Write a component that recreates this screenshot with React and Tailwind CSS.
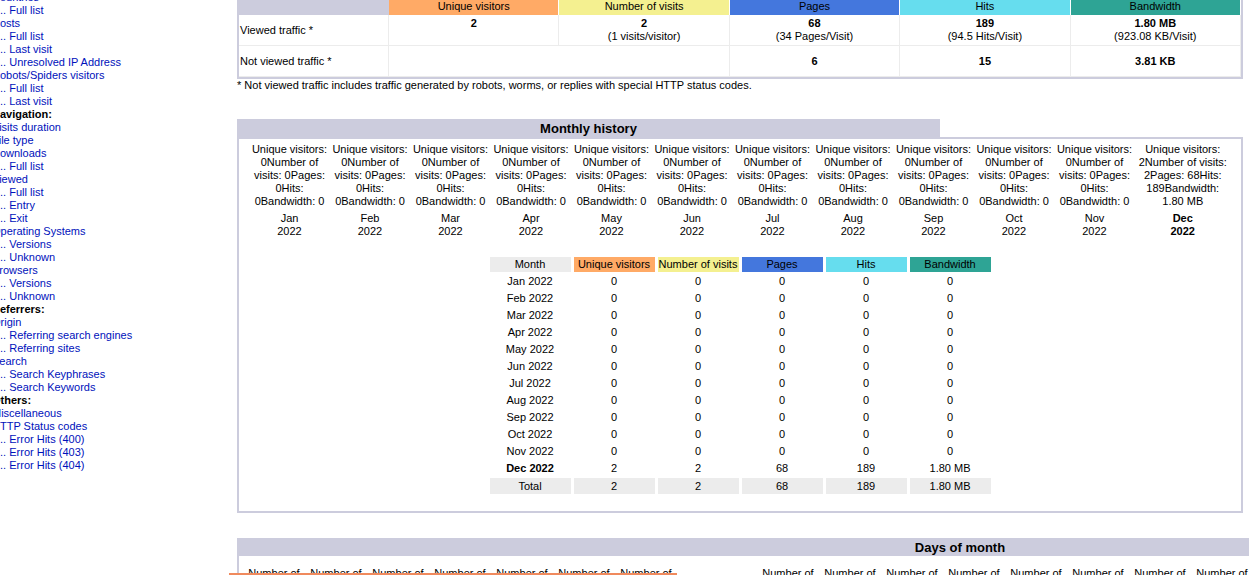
const menu = [
  { t: "Who:", h: true },
  { t: "Countries" },
  { t: "Full list", s: true },
  { t: "Hosts" },
  { t: "Full list", s: true },
  { t: "Last visit", s: true },
  { t: "Unresolved IP Address", s: true },
  { t: "Robots/Spiders visitors" },
  { t: "Full list", s: true },
  { t: "Last visit", s: true },
  { t: "Navigation:", h: true },
  { t: "Visits duration" },
  { t: "File type" },
  { t: "Downloads" },
  { t: "Full list", s: true },
  { t: "Viewed" },
  { t: "Full list", s: true },
  { t: "Entry", s: true },
  { t: "Exit", s: true },
  { t: "Operating Systems" },
  { t: "Versions", s: true },
  { t: "Unknown", s: true },
  { t: "Browsers" },
  { t: "Versions", s: true },
  { t: "Unknown", s: true },
  { t: "Referrers:", h: true },
  { t: "Origin" },
  { t: "Referring search engines", s: true },
  { t: "Referring sites", s: true },
  { t: "Search" },
  { t: "Search Keyphrases", s: true },
  { t: "Search Keywords", s: true },
  { t: "Others:", h: true },
  { t: "Miscellaneous" },
  { t: "HTTP Status codes" },
  { t: "Error Hits (400)", s: true },
  { t: "Error Hits (403)", s: true },
  { t: "Error Hits (404)", s: true },
];

const heads = [
  { t: "Unique visitors", c: "bg-[#ffaa66]" },
  { t: "Number of visits", c: "bg-[#f4f090]" },
  { t: "Pages", c: "bg-[#4477dd]" },
  { t: "Hits", c: "bg-[#66ddee]" },
  { t: "Bandwidth", c: "bg-[#2ea495]" },
];

const months = ["Jan", "Feb", "Mar", "Apr", "May", "Jun", "Jul", "Aug", "Sep", "Oct", "Nov", "Dec"];

const zeroLines = ["Unique visitors:", "0Number of", "visits: 0Pages:", "0Hits:", "0Bandwidth: 0"];
const decLines = ["Unique visitors:", "2Number of visits:", "2Pages: 68Hits:", "189Bandwidth:", "1.80 MB"];

function Sidebar() {
  return (
    <div className="w-[245px] shrink-0 -ml-[8px] mt-[-22.5px]">
      {menu.map((m, i) =>
        m.h ? (
          <div key={i} className="font-bold whitespace-nowrap">{m.t}</div>
        ) : (
          <div key={i} className={`whitespace-nowrap text-[#0011bb] ${m.s ? "pl-[5px]" : ""}`}>
            {m.s ? "... " : ""}
            <a>{m.t}</a>
          </div>
        )
      )}
    </div>
  );
}

function Summary() {
  const cell = "border-r border-[#ececec] flex flex-col items-center justify-center";
  return (
    <>
      <div className="w-[1006px] bg-[#ccccdd] px-[2px] pb-[2px]">
        <div className="bg-white">
          <div className="grid grid-cols-[150px_repeat(5,1fr)] h-[17px]">
            <div className="bg-[#ccccdd]" />
            {heads.map((h) => (
              <div key={h.t} className={`${h.c} border-r border-white flex items-center justify-center`}>
                {h.t}
              </div>
            ))}
          </div>
          <div className="grid grid-cols-[150px_repeat(5,1fr)] h-[31px] border-b border-[#ececec]">
            <div className="border-r border-[#ececec] flex items-center pl-[1px]">Viewed traffic *</div>
            <div className={cell}><b>2</b><span>&nbsp;</span></div>
            <div className={cell}><b>2</b><span>(1 visits/visitor)</span></div>
            <div className={cell}><b>68</b><span>(34 Pages/Visit)</span></div>
            <div className={cell}><b>189</b><span>(94.5 Hits/Visit)</span></div>
            <div className={cell}><b>1.80 MB</b><span>(923.08 KB/Visit)</span></div>
          </div>
          <div className="grid grid-cols-[150px_repeat(5,1fr)] h-[31px] border-b border-[#ececec]">
            <div className="border-r border-[#ececec] flex items-center pl-[1px]">Not viewed traffic *</div>
            <div className={`${cell} col-span-2`} />
            <div className={cell}><b>6</b></div>
            <div className={cell}><b>15</b></div>
            <div className={cell}><b>3.81 KB</b></div>
          </div>
        </div>
      </div>
      <div className="whitespace-nowrap">
        * Not viewed traffic includes traffic generated by robots, worms, or replies with special HTTP status codes.
      </div>
    </>
  );
}

function MonthlyHistory() {
  const rows = months.map((m, i) =>
    i === 11 ? ["Dec 2022", "2", "2", "68", "189", "1.80 MB"] : [`${m} 2022`, "0", "0", "0", "0", "0"]
  );
  return (
    <div className="mt-[27px] w-[1006px]">
      <div className="flex h-[18px]">
        <div className="w-[703px] bg-[#ccccdd] flex items-center justify-center text-[13px] font-bold">
          Monthly history
        </div>
      </div>
      <div className="border-2 border-[#ccccdd] bg-white pt-[4px] pb-[17px]">
        <div className="flex justify-center">
          {months.map((m, i) => {
            const dec = i === 11;
            return (
              <div key={m} className={`${dec ? "w-[96px]" : "w-[80.5px]"} shrink-0 text-center whitespace-nowrap`}>
                {(dec ? decLines : zeroLines).map((l, j) => (
                  <div key={j}>{l}</div>
                ))}
                <div className={`mt-[4px] ${dec ? "font-bold" : ""}`}>
                  <div>{m}</div>
                  <div>2022</div>
                </div>
              </div>
            );
          })}
        </div>
        <div className="mt-[19px] flex flex-col items-center gap-y-[2px]">
          <div className="flex gap-x-[3px] h-[15px]">
            <div className="w-[81px] bg-[#ececec] flex items-center justify-center">Month</div>
            {heads.map((h) => (
              <div key={h.t} className={`w-[81px] ${h.c} flex items-center justify-center whitespace-nowrap`}>
                {h.t}
              </div>
            ))}
          </div>
          {rows.map((r, i) => (
            <div key={i} className="flex gap-x-[3px] h-[15px]">
              {r.map((v, j) => (
                <div
                  key={j}
                  className={`w-[81px] flex items-center justify-center ${i === 11 && j === 0 ? "font-bold" : ""}`}
                >
                  {v}
                </div>
              ))}
            </div>
          ))}
          <div className="flex gap-x-[3px] h-[16px]">
            {["Total", "2", "2", "68", "189", "1.80 MB"].map((v, j) => (
              <div key={j} className="w-[81px] bg-[#ececec] flex items-center justify-center">
                {v}
              </div>
            ))}
          </div>
        </div>
      </div>
    </div>
  );
}

function DaysOfMonth() {
  const left = Array.from({ length: 7 });
  const right = Array.from({ length: 9 });
  return (
    <div className="mt-[25px] w-[2066px]">
      <div className="flex h-[18px]">
        <div className="w-[1446px] bg-[#ccccdd] flex items-center justify-center text-[13px] font-bold">
          Days of month
        </div>
      </div>
      <div className="border-l-2 border-[#ccccdd] bg-white pt-[11px] flex pl-[4px]">
        {left.map((_, i) => (
          <div key={i} className="w-[62px] shrink-0 text-center">Number of visits: 0</div>
        ))}
        <div className="w-[80px] shrink-0" />
        {right.map((_, i) => (
          <div key={i} className="w-[62px] shrink-0 text-center">Number of visits: 0</div>
        ))}
      </div>
    </div>
  );
}

export default function App() {
  return (
    <div className="relative w-[1249px] h-[575px] overflow-hidden bg-white text-black text-[11px] leading-[13px] font-['Liberation_Sans',Arial,sans-serif]">
      <div className="flex items-start">
        <Sidebar />
        <div className="flex-1 min-w-0 mt-[-2px]">
          <Summary />
          <MonthlyHistory />
          <DaysOfMonth />
        </div>
      </div>
      <div className="absolute left-[229px] top-[573px] w-[448px] h-[2px] bg-[#f08a5d]" />
    </div>
  );
}
